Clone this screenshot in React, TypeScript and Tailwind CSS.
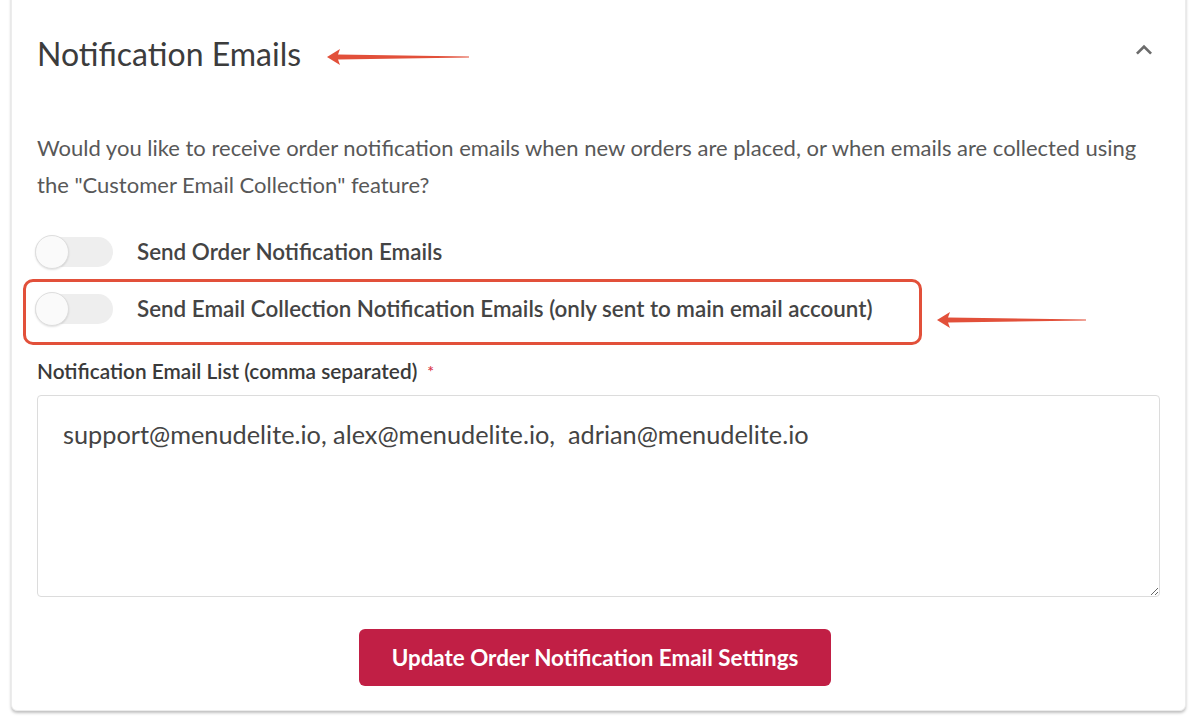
import React from "react";

function Arrow({ width }: { width: number }) {
  return (
    <svg width={width} height="18" viewBox={`0 0 ${width} 18`}>
      <polygon
        points={`0,9 13,1 11,6.5 ${width},8.6 ${width},9.4 11,11.5 13,17`}
        fill="#e2503a"
      />
    </svg>
  );
}

function Toggle() {
  return (
    <div className="relative w-[78px] h-[34px] flex items-center shrink-0">
      <div className="w-[78px] h-[30px] rounded-full bg-[#eeeeee]" />
      <div className="absolute left-0 top-0 w-[34px] h-[34px] rounded-full bg-[#fafafa] border border-[#dedede] shadow-[0_1px_2px_rgba(0,0,0,0.12)]" />
    </div>
  );
}

export default function App() {
  return (
    <div
      className="w-[1195px] h-[723px] bg-white overflow-hidden relative"
      style={{ fontFamily: "Lato, 'Open Sans', sans-serif" }}
    >
      <div className="absolute left-[11px] top-[-10px] w-[1175px] h-[721px] bg-white rounded-md border border-[#ececec] shadow-[0_2px_3px_rgba(0,0,0,0.25)]">
        <div className="flex flex-col px-[25px]">
          {/* header */}
          <div className="h-[120px] flex items-center justify-between">
            <div className="text-[32px] text-[#3c3c3c] leading-none pt-[6px]">Notification Emails</div>
            <svg width="32" height="32" viewBox="0 0 24 24" className="mr-[0px] mt-[-2px]">
              <path d="M7.41 15.41 12 10.83l4.59 4.58L18 14l-6-6-6 6z" fill="#6b6b6b" />
            </svg>
          </div>
          {/* description */}
          <div className="mt-[18px] text-[22px] leading-[37px] text-[#585858]">
            Would you like to receive order notification emails when new orders are placed, or when emails are collected using the "Customer Email Collection" feature?
          </div>
          {/* toggles */}
          <div className="mt-[32px] flex items-center gap-[24px] ml-[-2px]">
            <Toggle />
            <div className="text-[22.4px] font-semibold text-[#444444]">Send Order Notification Emails</div>
          </div>
          <div className="mt-[23px] flex items-center gap-[24px] ml-[-2px]">
            <Toggle />
            <div className="text-[22.4px] font-semibold text-[#444444]">
              Send Email Collection Notification Emails (only sent to main email account)
            </div>
          </div>
          {/* label */}
          <div className="mt-[33px] text-[20.8px] font-semibold text-[#3a3a3a] leading-[24px]">
            Notification Email List (comma separated)
            <span className="text-[#d9364a] ml-[10px] text-[16px] align-top">*</span>
          </div>
          <textarea
            className="mt-[12px] h-[202px] w-full border border-[#dcdcdc] rounded-[4px] pl-[25px] pr-4 pt-[22px] text-[25.3px] leading-[32px] text-[#444444] outline-none resize-y"
            style={{ fontFamily: "Lato, 'Open Sans', sans-serif" }}
            defaultValue="support@menudelite.io, alex@menudelite.io,  adrian@menudelite.io"
          />
          <div className="mt-[32px] flex justify-center">
            <button className="w-[472px] h-[57px] rounded-[6px] bg-[#c11f45] text-white text-[22.4px] font-bold ml-[-7px]">
              Update Order Notification Email Settings
            </button>
          </div>
        </div>
        {/* red highlight box */}
        <div className="absolute left-[11px] top-[288px] w-[899px] h-[66px] border-[3px] border-[#e2503a] rounded-[10px] pointer-events-none" />
      </div>
      {/* arrows */}
      <div className="absolute left-[327px] top-[48px]">
        <Arrow width={142} />
      </div>
      <div className="absolute left-[937px] top-[311px]">
        <Arrow width={149} />
      </div>
    </div>
  );
}
